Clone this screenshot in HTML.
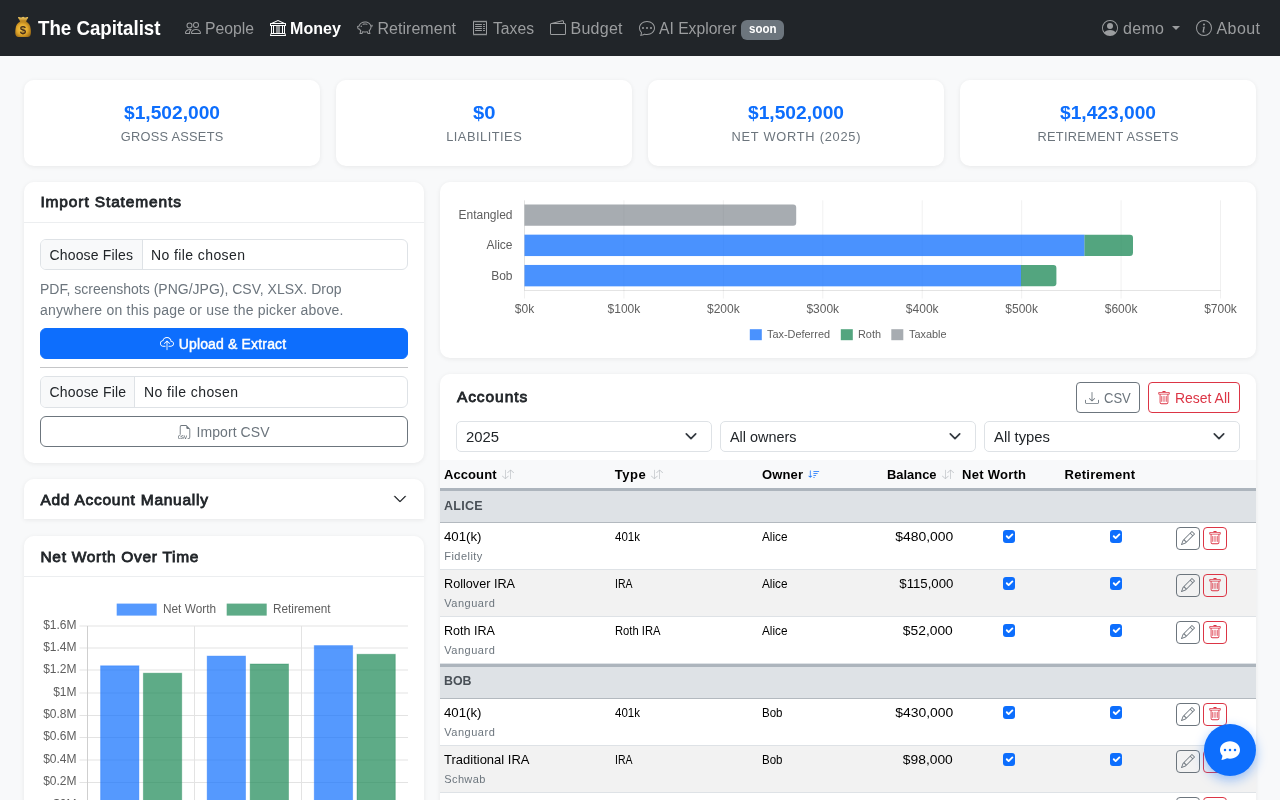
<!DOCTYPE html>
<html lang="en">
<head>
<meta charset="utf-8">
<title>The Capitalist</title>
<style>
*{box-sizing:border-box;margin:0;padding:0}
html,body{width:1280px;height:800px;overflow:hidden}
body{will-change:transform;font-family:"Liberation Sans",sans-serif;background:#f8f9fa;color:#212529;font-size:16px;position:relative}
svg{display:block}
.t{position:absolute;white-space:nowrap;line-height:1.2}
.ic{position:absolute}
.box{position:absolute}
#nav{position:absolute;left:0;top:0;width:1280px;height:56px;background:#212529;color:#9b9d9f;fill:#9b9d9f}
.card{position:absolute;background:#fff;border-radius:10px;box-shadow:0 1px 5px rgba(0,0,0,.07);overflow:hidden}
.hline{position:absolute;left:0;right:0;height:1px;background:#eceef0}
.file{position:absolute;left:16px;width:368px;height:31px;border:1px solid #dee2e6;border-radius:6px;background:#fff;overflow:hidden}
.file .b{position:absolute;left:0;top:0;bottom:0;background:#f8f9fa;border-right:1px solid #dee2e6}
.sel{position:absolute;top:47px;width:256px;height:31px;border:1px solid #dee2e6;border-radius:5px;background:#fff}
.btn{position:absolute;border-radius:6px;border:1px solid}
.ck{position:absolute;width:12.5px;height:12.5px;border-radius:3px;background:#0d6efd}
.ck svg{position:absolute;left:0;top:0}
.row{position:absolute;left:0;width:816px;border-bottom:1px solid #dee2e6}
.sbtn{position:absolute;width:24px;height:23px;border-radius:4px;border:1px solid;background:transparent}
</style>
</head>
<body>
<div id="nav">
<svg class="ic" style="left:13px;top:15px" width="20" height="24" viewBox="13 15 20 24"><defs><radialGradient id="mb" cx="0.45" cy="0.5" r="0.62"><stop offset="0" stop-color="#f6cf52"/><stop offset=".55" stop-color="#e2a82c"/><stop offset="1" stop-color="#9c6a14"/></radialGradient><linearGradient id="mt" x1="0" y1="0" x2="0" y2="1"><stop offset="0" stop-color="#f3cf6a"/><stop offset="1" stop-color="#b9821d"/></linearGradient></defs><path d="M18.100 17.300c1.100-.600 2 .300 2.700.300.800 0 1.500-.800 2.300-.800s1.500.800 2.300.800c.700 0 1.600-.900 2.700-.300.600.500-1.300 2-1.900 3.900h-6.200c-.600-1.900-2.500-3.400-1.900-3.900z" fill="url(#mt)"/><path d="M20.200 21.600h5.800c2.700 1.300 4.300 3.700 4.700 7.300.3 2.600.4 4.900-.4 6.600-.600 1.100-1.800 1.500-3.600 1.500h-7.200c-1.800 0-3-.400-3.600-1.500-.800-1.700-.700-4-.400-6.600.4-3.600 2-6 4.700-7.300z" fill="url(#mb)"/><rect x="19.900" y="20.500" width="6.400" height="1.500" rx=".75" fill="#c08a22"/></svg>
<div class="t" style="left:19.7px;top:24.3px;font-size:11.5px;line-height:12px;font-weight:bold;color:#47301c">$</div>
<div class="t" style="left:38px;top:0px;font-size:20.6px;line-height:56px;transform:scaleX(0.907);transform-origin:left center;font-weight:bold;color:#fff">The Capitalist</div>
<svg class="ic" style="left:184.5px;top:20px" width="16" height="16" viewBox="0 0 16 16"><path d="M15 14s1 0 1-1-1-4-5-4-5 3-5 4 1 1 1 1zm-7.978-1L7 12.996c.001-.264.167-1.03.76-1.72C8.312 10.629 9.282 10 11 10c1.717 0 2.687.63 3.24 1.276.593.69.758 1.457.76 1.72l-.008.002-.014.002zM11 7a2 2 0 1 0 0-4 2 2 0 0 0 0 4m3-2a3 3 0 1 1-6 0 3 3 0 0 1 6 0M6.936 9.28a6 6 0 0 0-1.23-.247A7 7 0 0 0 5 9c-4 0-5 3-5 4q0 1 1 1h4.216A2.24 2.24 0 0 1 5 13c0-1.01.377-2.042 1.09-2.904.243-.294.526-.569.846-.816M4.92 10A5.5 5.5 0 0 0 4 13H1c0-.26.164-1.03.76-1.724.545-.636 1.492-1.256 3.16-1.275ZM1.5 5.5a3 3 0 1 1 6 0 3 3 0 0 1-6 0m3-2a2 2 0 1 0 0 4 2 2 0 0 0 0-4"/></svg>
<div class="t" style="left:205px;top:1px;font-size:16px;line-height:56px;transform:scaleX(0.9835);transform-origin:left center">People</div>
<svg class="ic" style="left:270px;top:20px" width="16" height="16" viewBox="0 0 16 16" fill="#fff"><path d="m8 0 6.61 3h.89a.5.5 0 0 1 .5.5v2a.5.5 0 0 1-.5.5H15v7a.5.5 0 0 1 .485.38l.5 2a.498.498 0 0 1-.485.62H.5a.498.498 0 0 1-.485-.62l.5-2A.5.5 0 0 1 1 13V6H.5a.5.5 0 0 1-.5-.5v-2A.5.5 0 0 1 .5 3h.89zM3.777 3h8.447L8 1zM2 6v7h1V6zm2 0v7h2.5V6zm3.5 0v7h1V6zm2 0v7H12V6zM13 6v7h1V6zm2-1V4H1v1zm-.39 9H1.39l-.25 1h13.72z"/></svg>
<div class="t" style="left:290px;top:1px;font-size:16px;line-height:56px;letter-spacing:0.082px;font-weight:bold;color:#fff">Money</div>
<svg class="ic" style="left:356.5px;top:20px" width="16" height="16" viewBox="0 0 16 16"><path d="M5 6.25a.75.75 0 1 1-1.5 0 .75.75 0 0 1 1.5 0m1.138-1.496A6.6 6.6 0 0 1 7.964 4.5c.666 0 1.303.097 1.893.273a.5.5 0 0 0 .286-.958A7.6 7.6 0 0 0 7.964 3.5c-.734 0-1.441.103-2.102.292a.5.5 0 1 0 .276.962"/><path fill-rule="evenodd" d="M7.964 1.527c-2.977 0-5.571 1.704-6.32 4.125h-.55A1 1 0 0 0 .11 6.824l.254 1.46a1.5 1.5 0 0 0 1.478 1.243h.263c.3.513.688.978 1.145 1.382l-.729 2.477a.5.5 0 0 0 .48.641h2a.5.5 0 0 0 .471-.332l.482-1.351c.635.173 1.31.267 2.011.267.707 0 1.388-.095 2.028-.272l.543 1.372a.5.5 0 0 0 .465.316h2a.5.5 0 0 0 .478-.645l-.761-2.506C13.81 9.895 14.5 8.559 14.5 7.069q0-.218-.02-.431c.261-.11.508-.266.705-.444.315.306.815.306.815-.417 0 .223-.5.223-.461-.026a1 1 0 0 0 .09-.255.7.7 0 0 0-.202-.645.58.58 0 0 0-.707-.098.74.74 0 0 0-.375.562c-.024.243.082.48.32.654a2 2 0 0 1-.259.153c-.534-2.664-3.284-4.595-6.442-4.595M2.516 6.26c.455-2.066 2.667-3.733 5.448-3.733 3.146 0 5.536 2.114 5.536 4.542 0 1.254-.624 2.41-1.67 3.248a.5.5 0 0 0-.165.535l.66 2.175h-.985l-.59-1.487a.5.5 0 0 0-.629-.288c-.661.23-1.39.359-2.157.359a6.6 6.6 0 0 1-2.157-.359.5.5 0 0 0-.635.304l-.525 1.471h-.979l.633-2.15a.5.5 0 0 0-.17-.534 4.65 4.65 0 0 1-1.284-1.541.5.5 0 0 0-.446-.275h-.56a.5.5 0 0 1-.492-.414l-.254-1.46h.933a.5.5 0 0 0 .488-.393m12.621-.857a.6.6 0 0 1-.098.21l-.044-.025c-.146-.09-.157-.175-.152-.223a.24.24 0 0 1 .117-.173c.049-.027.08-.021.113.012a.2.2 0 0 1 .064.199"/></svg>
<div class="t" style="left:377.5px;top:1px;font-size:16px;line-height:56px;letter-spacing:0.028px">Retirement</div>
<svg class="ic" style="left:472px;top:20px" width="16" height="16" viewBox="0 0 16 16"><path d="M1.92.506a.5.5 0 0 1 .434.14L3 1.293l.646-.647a.5.5 0 0 1 .708 0L5 1.293l.646-.647a.5.5 0 0 1 .708 0L7 1.293l.646-.647a.5.5 0 0 1 .708 0L9 1.293l.646-.647a.5.5 0 0 1 .708 0l.646.647.646-.647a.5.5 0 0 1 .708 0l.646.647.646-.647a.5.5 0 0 1 .801.13l.5 1A.5.5 0 0 1 15 2v12a.5.5 0 0 1-.053.224l-.5 1a.5.5 0 0 1-.8.13L13 14.707l-.646.647a.5.5 0 0 1-.708 0L11 14.707l-.646.647a.5.5 0 0 1-.708 0L9 14.707l-.646.647a.5.5 0 0 1-.708 0L7 14.707l-.646.647a.5.5 0 0 1-.708 0L5 14.707l-.646.647a.5.5 0 0 1-.708 0L3 14.707l-.646.647a.5.5 0 0 1-.801-.13l-.5-1A.5.5 0 0 1 1 14V2a.5.5 0 0 1 .053-.224l.5-1a.5.5 0 0 1 .367-.27m.217 1.338L2 2.118v11.764l.137.274.51-.51a.5.5 0 0 1 .707 0l.646.647.646-.646a.5.5 0 0 1 .708 0l.646.646.646-.646a.5.5 0 0 1 .708 0l.646.646.646-.646a.5.5 0 0 1 .708 0l.646.646.646-.646a.5.5 0 0 1 .708 0l.646.646.646-.646a.5.5 0 0 1 .708 0l.509.509.137-.274V2.118l-.137-.274-.51.51a.5.5 0 0 1-.707 0L12 1.707l-.646.647a.5.5 0 0 1-.708 0L10 1.707l-.646.647a.5.5 0 0 1-.708 0L8 1.707l-.646.647a.5.5 0 0 1-.708 0L6 1.707l-.646.647a.5.5 0 0 1-.708 0L4 1.707l-.646.647a.5.5 0 0 1-.708 0z"/><path d="M3 4.5a.5.5 0 0 1 .5-.5h6a.5.5 0 1 1 0 1h-6a.5.5 0 0 1-.5-.5m0 2a.5.5 0 0 1 .5-.5h6a.5.5 0 1 1 0 1h-6a.5.5 0 0 1-.5-.5m0 2a.5.5 0 0 1 .5-.5h6a.5.5 0 1 1 0 1h-6a.5.5 0 0 1-.5-.5m0 2a.5.5 0 0 1 .5-.5h6a.5.5 0 0 1 0 1h-6a.5.5 0 0 1-.5-.5m8-6a.5.5 0 0 1 .5-.5h1a.5.5 0 0 1 0 1h-1a.5.5 0 0 1-.5-.5m0 2a.5.5 0 0 1 .5-.5h1a.5.5 0 0 1 0 1h-1a.5.5 0 0 1-.5-.5m0 2a.5.5 0 0 1 .5-.5h1a.5.5 0 0 1 0 1h-1a.5.5 0 0 1-.5-.5m0 2a.5.5 0 0 1 .5-.5h1a.5.5 0 0 1 0 1h-1a.5.5 0 0 1-.5-.5"/></svg>
<div class="t" style="left:493px;top:1px;font-size:16px;line-height:56px;transform:scaleX(0.9809);transform-origin:left center">Taxes</div>
<svg class="ic" style="left:549.5px;top:20px" width="16" height="16" viewBox="0 0 16 16"><path d="M12.136.326A1.5 1.5 0 0 1 14 1.78V3h.5A1.5 1.5 0 0 1 16 4.5v9a1.5 1.5 0 0 1-1.5 1.5h-13A1.5 1.5 0 0 1 0 13.5v-9a1.5 1.5 0 0 1 1.432-1.499zM5.562 3H13V1.78a.5.5 0 0 0-.621-.484zM1.5 4a.5.5 0 0 0-.5.5v9a.5.5 0 0 0 .5.5h13a.5.5 0 0 0 .5-.5v-9a.5.5 0 0 0-.5-.5z"/></svg>
<div class="t" style="left:570.5px;top:1px;font-size:16px;line-height:56px;letter-spacing:0.258px">Budget</div>
<svg class="ic" style="left:638.5px;top:20px" width="16" height="16" viewBox="0 0 16 16"><path d="M5 8a1 1 0 1 1-2 0 1 1 0 0 1 2 0m4 0a1 1 0 1 1-2 0 1 1 0 0 1 2 0m3 1a1 1 0 1 0 0-2 1 1 0 0 0 0 2"/><path d="m2.165 15.803.02-.004c1.83-.363 2.948-.842 3.468-1.105A9 9 0 0 0 8 15c4.418 0 8-3.134 8-7s-3.582-7-8-7-8 3.134-8 7c0 1.76.743 3.37 1.97 4.6a10.4 10.4 0 0 1-.524 2.318l-.003.011a11 11 0 0 1-.244.637c-.079.186.074.394.273.362a22 22 0 0 0 .693-.125m.8-3.108a1 1 0 0 0-.287-.801C1.618 10.83 1 9.468 1 8c0-3.192 3.004-6 7-6s7 2.808 7 6-3.004 6-7 6a8 8 0 0 1-2.088-.272 1 1 0 0 0-.711.074c-.387.196-1.24.57-2.634.893a11 11 0 0 0 .398-2"/></svg>
<div class="t" style="left:659px;top:1px;font-size:16px;line-height:56px;transform:scaleX(0.9793);transform-origin:left center">AI Explorer</div>
<div class="box" style="left:741px;top:20px;width:43px;height:19.5px;border-radius:6px;background:#6c757d"></div>
<div class="t" style="left:749px;top:20px;font-size:12px;line-height:19px;transform:scaleX(0.9594);transform-origin:left center;font-weight:bold;color:#fff">soon</div>
<svg class="ic" style="left:1102px;top:20px" width="16" height="16" viewBox="0 0 16 16"><path d="M11 6a3 3 0 1 1-6 0 3 3 0 0 1 6 0"/><path fill-rule="evenodd" d="M0 8a8 8 0 1 1 16 0A8 8 0 0 1 0 8m8-7a7 7 0 0 0-5.468 11.37C3.242 11.226 4.805 10 8 10s4.757 1.225 5.468 2.37A7 7 0 0 0 8 1"/></svg>
<div class="t" style="left:1123px;top:1px;font-size:16px;line-height:56px;letter-spacing:0.325px">demo</div>
<div class="box" style="left:1172px;top:26px;width:0;height:0;border-left:4.500px solid transparent;border-right:4.500px solid transparent;border-top:4.500px solid #9b9d9f"></div>
<svg class="ic" style="left:1196px;top:20px" width="16" height="16" viewBox="0 0 16 16"><path d="M8 15A7 7 0 1 1 8 1a7 7 0 0 1 0 14m0 1A8 8 0 1 0 8 0a8 8 0 0 0 0 16"/><path d="m8.93 6.588-2.29.287-.082.38.45.083c.294.07.352.176.288.469l-.738 3.468c-.194.897.105 1.319.808 1.319.545 0 1.178-.252 1.465-.598l.088-.416c-.2.176-.492.246-.686.246-.275 0-.375-.193-.304-.533zM9 4.5a1 1 0 1 1-2 0 1 1 0 0 1 2 0"/></svg>
<div class="t" style="left:1216.5px;top:1px;font-size:16px;line-height:56px;letter-spacing:0.422px">About</div>
</div>
<div class="card" style="left:24px;top:80px;width:296px;height:86px">
<div class="t" style="left:100.0px;top:22.5px;font-size:17.6px;line-height:21px;transform:scaleX(1.0898);transform-origin:left center;font-weight:bold;color:#0d6efd">$1,502,000</div>
<div class="t" style="left:96.8px;top:49px;font-size:12.8px;line-height:16px;letter-spacing:0.265px;color:#6c757d">GROSS ASSETS</div>
</div>
<div class="card" style="left:336px;top:80px;width:296px;height:86px">
<div class="t" style="left:136.8px;top:22.5px;font-size:17.6px;line-height:21px;transform:scaleX(1.1493);transform-origin:left center;font-weight:bold;color:#0d6efd">$0</div>
<div class="t" style="left:110.2px;top:49px;font-size:12.8px;line-height:16px;letter-spacing:0.507px;color:#6c757d">LIABILITIES</div>
</div>
<div class="card" style="left:648px;top:80px;width:296px;height:86px">
<div class="t" style="left:100.0px;top:22.5px;font-size:17.6px;line-height:21px;transform:scaleX(1.0898);transform-origin:left center;font-weight:bold;color:#0d6efd">$1,502,000</div>
<div class="t" style="left:83.5px;top:49px;font-size:12.8px;line-height:16px;letter-spacing:0.76px;color:#6c757d">NET WORTH (2025)</div>
</div>
<div class="card" style="left:960px;top:80px;width:296px;height:86px">
<div class="t" style="left:100.0px;top:22.5px;font-size:17.6px;line-height:21px;transform:scaleX(1.0898);transform-origin:left center;font-weight:bold;color:#0d6efd">$1,423,000</div>
<div class="t" style="left:77.5px;top:49px;font-size:12.8px;line-height:16px;letter-spacing:0.292px;color:#6c757d">RETIREMENT ASSETS</div>
</div>
<div class="card" style="left:24px;top:182px;width:400px;height:281px">
<div class="t" style="left:16.4px;top:10.2px;font-size:15.5px;line-height:20px;letter-spacing:0.873px;-webkit-text-stroke:.8px #212529">Import Statements</div>
<div class="hline" style="top:40px"></div>
<div class="file" style="top:57px"><div class="b" style="width:102px"></div>
<div class="t" style="left:8.5px;top:1px;font-size:14px;line-height:29px;letter-spacing:0.163px">Choose Files</div>
<div class="t" style="left:110px;top:1px;font-size:14px;line-height:29px;letter-spacing:0.406px">No file chosen</div>
</div>
<div class="t" style="left:16px;top:96.5px;font-size:14px;line-height:21px;letter-spacing:0.003px;color:#6c757d">PDF, screenshots (PNG/JPG), CSV, XLSX. Drop</div>
<div class="t" style="left:16px;top:117.5px;font-size:14px;line-height:21px;letter-spacing:0.207px;color:#6c757d">anywhere on this page or use the picker above.</div>
<div class="btn" style="left:16px;top:146px;width:368px;height:31px;background:#0d6efd;border-color:#0d6efd"></div>
<svg class="ic" style="left:136px;top:154.5px" width="14" height="14" viewBox="0 0 16 16" fill="#fff"><path fill-rule="evenodd" d="M4.406 1.342A5.53 5.53 0 0 1 8 0c2.69 0 4.923 2 5.166 4.579C14.758 4.804 16 6.137 16 7.773 16 9.569 14.502 11 12.687 11H10a.5.5 0 0 1 0-1h2.688C13.979 10 15 8.988 15 7.773c0-1.216-1.02-2.228-2.313-2.228h-.5v-.5C12.188 2.825 10.328 1 8 1a4.53 4.53 0 0 0-2.941 1.1c-.757.652-1.153 1.438-1.153 2.055v.448l-.445.049C2.064 4.805 1 5.952 1 7.318 1 8.785 2.23 10 3.781 10H6a.5.5 0 0 1 0 1H3.781C1.708 11 0 9.366 0 7.318c0-1.763 1.266-3.223 2.942-3.593.143-.863.698-1.723 1.464-2.383"/><path fill-rule="evenodd" d="M7.646 4.146a.5.5 0 0 1 .708 0l3 3a.5.5 0 0 1-.708.708L8.5 5.707V14.5a.5.5 0 0 1-1 0V5.707L5.354 7.854a.5.5 0 1 1-.708-.708z"/></svg>
<div class="t" style="left:154.7px;top:147.8px;font-size:14px;line-height:29px;color:#fff;letter-spacing:0.16px;-webkit-text-stroke:.45px #fff">Upload &amp; Extract</div>
<div class="box" style="left:16px;top:185px;width:368px;height:1px;background:#c5c6c8"></div>
<div class="file" style="top:194.250px;height:31.250px"><div class="b" style="width:94px"></div>
<div class="t" style="left:8.5px;top:1px;font-size:14px;line-height:29px;letter-spacing:0.18px">Choose File</div>
<div class="t" style="left:103px;top:1px;font-size:14px;line-height:29px;letter-spacing:0.406px">No file chosen</div>
</div>
<div class="btn" style="left:16px;top:234.250px;width:368px;height:31px;border-color:#6c757d"></div>
<svg class="ic" style="left:153.5px;top:243px" width="14" height="14" viewBox="0 0 16 16" fill="#6c757d"><path fill-rule="evenodd" d="M14 4.5V14a2 2 0 0 1-2 2h-1v-1h1a1 1 0 0 0 1-1V4.5h-2A1.5 1.5 0 0 1 9.500 3V1H4a1 1 0 0 0-1 1v9H2V2a2 2 0 0 1 2-2h5.500zM3.517 14.841a1.130 1.130 0 0 0 .401.823q.195.162.478.252.284.091.665.091.507 0 .859-.158.354-.158.539-.440.187-.284.187-.656 0-.336-.134-.560a1 1 0 0 0-.375-.357 2 2 0 0 0-.566-.210l-.621-.144a1 1 0 0 1-.404-.176.370.370 0 0 1-.144-.299q0-.234.185-.384.188-.152.512-.152.214 0 .370.068a.600.600 0 0 1 .246.181.560.560 0 0 1 .120.258h.750a1.100 1.100 0 0 0-.200-.566 1.200 1.200 0 0 0-.500-.410 1.800 1.800 0 0 0-.780-.152q-.439 0-.776.150-.337.149-.527.421-.190.273-.190.639 0 .302.122.524.124.223.352.367.228.143.539.213l.618.144q.310.073.463.193a.390.390 0 0 1 .152.326.500.500 0 0 1-.085.290.560.560 0 0 1-.255.193q-.167.070-.413.070-.175 0-.320-.040a.800.800 0 0 1-.248-.115.580.580 0 0 1-.255-.384zM.806 13.693q0-.373.102-.633a.870.870 0 0 1 .302-.399.800.800 0 0 1 .475-.137q.225 0 .398.097a.700.700 0 0 1 .272.260.850.850 0 0 1 .120.381h.765v-.072a1.330 1.330 0 0 0-.466-.964 1.400 1.400 0 0 0-.489-.272 1.800 1.800 0 0 0-.606-.097q-.534 0-.911.223-.375.222-.572.632-.195.410-.196.979v.498q0 .568.193.976.197.407.572.626.375.217.914.217.439 0 .785-.164t.550-.454a1.270 1.270 0 0 0 .226-.674v-.076h-.764a.800.800 0 0 1-.118.363.700.700 0 0 1-.272.250.900.900 0 0 1-.401.087.850.850 0 0 1-.478-.132.830.830 0 0 1-.299-.392 1.700 1.700 0 0 1-.102-.627zm8.239 2.238h-.953l-1.338-3.999h.917l.896 3.138h.038l.888-3.138h.879z"/></svg>
<div class="t" style="left:172.5px;top:235.5px;font-size:14px;line-height:29px;letter-spacing:0.072px;color:#6c757d">Import CSV</div>
</div>
<div class="card" style="left:24px;top:479px;width:400px;height:40px;border-radius:10px 10px 0 0">
<div class="t" style="left:16.4px;top:10.5px;font-size:15.5px;line-height:20px;letter-spacing:0.749px;-webkit-text-stroke:.8px #212529">Add Account Manually</div>
<svg class="ic" style="left:369px;top:12.5px" width="14" height="14" viewBox="0 0 16 16" fill="#212529" stroke="#212529" stroke-width=".5"><path fill-rule="evenodd" d="M1.646 4.646a.5.5 0 0 1 .708 0L8 10.293l5.646-5.647a.5.5 0 0 1 .708.708l-6 6a.5.5 0 0 1-.708 0l-6-6a.5.5 0 0 1 0-.708"/></svg>
</div>
<div class="card" style="left:24px;top:535.500px;width:400px;height:300px">
<div class="t" style="left:16.4px;top:11.1px;font-size:15.5px;line-height:20px;letter-spacing:0.712px;-webkit-text-stroke:.8px #212529">Net Worth Over Time</div>
<div class="hline" style="top:40.500px"></div>
<svg class="ic" style="left:0;top:42px" width="400" height="260" viewBox="0 42 400 260">
<line x1="55.50" x2="384.00" y1="90.0" y2="90.0" stroke="#e3e3e3" stroke-width="1"/>
<line x1="55.50" x2="384.00" y1="112.0" y2="112.0" stroke="#e3e3e3" stroke-width="1"/>
<line x1="55.50" x2="384.00" y1="134.0" y2="134.0" stroke="#e3e3e3" stroke-width="1"/>
<line x1="55.50" x2="384.00" y1="157.0" y2="157.0" stroke="#e3e3e3" stroke-width="1"/>
<line x1="55.50" x2="384.00" y1="179.5" y2="179.5" stroke="#e3e3e3" stroke-width="1"/>
<line x1="55.50" x2="384.00" y1="201.5" y2="201.5" stroke="#e3e3e3" stroke-width="1"/>
<line x1="55.50" x2="384.00" y1="224.0" y2="224.0" stroke="#e3e3e3" stroke-width="1"/>
<line x1="55.50" x2="384.00" y1="246.5" y2="246.5" stroke="#e3e3e3" stroke-width="1"/>
<line x1="55.50" x2="384.00" y1="269.0" y2="269.0" stroke="#e3e3e3" stroke-width="1"/>
<line x1="63.5" x2="63.5" y1="90.00" y2="300" stroke="#cfcfcf" stroke-width="1"/>
<line x1="170.5" x2="170.5" y1="90.00" y2="300" stroke="#e3e3e3" stroke-width="1"/>
<line x1="277.5" x2="277.5" y1="90.00" y2="300" stroke="#e3e3e3" stroke-width="1"/>
<rect x="76.60" y="129.80" width="38.3" height="300" fill="#0d6efd" fill-opacity=".7" stroke="#0d6efd" stroke-opacity=".35" stroke-width="1"/>
<rect x="119.40" y="137.20" width="38.3" height="300" fill="#198754" fill-opacity=".7" stroke="#198754" stroke-opacity=".35" stroke-width="1"/>
<rect x="183.20" y="120.10" width="38.3" height="300" fill="#0d6efd" fill-opacity=".7" stroke="#0d6efd" stroke-opacity=".35" stroke-width="1"/>
<rect x="226.20" y="128.00" width="38.3" height="300" fill="#198754" fill-opacity=".7" stroke="#198754" stroke-opacity=".35" stroke-width="1"/>
<rect x="290.30" y="109.60" width="38.3" height="300" fill="#0d6efd" fill-opacity=".7" stroke="#0d6efd" stroke-opacity=".35" stroke-width="1"/>
<rect x="333.00" y="118.30" width="38.3" height="300" fill="#198754" fill-opacity=".7" stroke="#198754" stroke-opacity=".35" stroke-width="1"/>
<rect x="92.70" y="67.60" width="40" height="12" fill="#0d6efd" fill-opacity=".7"/>
<rect x="202.70" y="67.60" width="40" height="12" fill="#198754" fill-opacity=".7"/>
</svg>
<div class="t" style="left:139.2px;top:66.79999999999995px;font-size:12px;line-height:14px;transform:scaleX(0.9852);transform-origin:left center;color:#5e5e5e">Net Worth</div>
<div class="t" style="left:249.3px;top:66.79999999999995px;font-size:12px;line-height:14px;transform:scaleX(0.9798);transform-origin:left center;color:#5e5e5e">Retirement</div>
<div class="t" style="right:347.5px;top:82.3px;font-size:12px;line-height:14px;color:#5e5e5e">$1.6M</div>
<div class="t" style="right:347.5px;top:104.3px;font-size:12px;line-height:14px;color:#5e5e5e">$1.4M</div>
<div class="t" style="right:347.5px;top:126.3px;font-size:12px;line-height:14px;color:#5e5e5e">$1.2M</div>
<div class="t" style="right:347.5px;top:149.3px;font-size:12px;line-height:14px;color:#5e5e5e">$1M</div>
<div class="t" style="right:347.5px;top:171.8px;font-size:12px;line-height:14px;color:#5e5e5e">$0.8M</div>
<div class="t" style="right:347.5px;top:193.8px;font-size:12px;line-height:14px;color:#5e5e5e">$0.6M</div>
<div class="t" style="right:347.5px;top:216.3px;font-size:12px;line-height:14px;color:#5e5e5e">$0.4M</div>
<div class="t" style="right:347.5px;top:238.8px;font-size:12px;line-height:14px;color:#5e5e5e">$0.2M</div>
<div class="t" style="right:347.5px;top:261.3px;font-size:12px;line-height:14px;color:#5e5e5e">$0M</div>
</div>
<div class="card" style="left:440px;top:182px;width:816px;height:176px">
<svg class="ic" style="left:0;top:0" width="816" height="176" viewBox="0 0 816 176">
<line x1="84.5" x2="84.5" y1="18.30" y2="116.50" stroke="#000" stroke-opacity=".058" stroke-width="1"/>
<line x1="183.93" x2="183.93" y1="18.30" y2="116.50" stroke="#000" stroke-opacity=".058" stroke-width="1"/>
<line x1="283.36" x2="283.36" y1="18.30" y2="116.50" stroke="#000" stroke-opacity=".058" stroke-width="1"/>
<line x1="382.79" x2="382.79" y1="18.30" y2="116.50" stroke="#000" stroke-opacity=".058" stroke-width="1"/>
<line x1="482.22" x2="482.22" y1="18.30" y2="116.50" stroke="#000" stroke-opacity=".058" stroke-width="1"/>
<line x1="581.65" x2="581.65" y1="18.30" y2="116.50" stroke="#000" stroke-opacity=".058" stroke-width="1"/>
<line x1="681.08" x2="681.08" y1="18.30" y2="116.50" stroke="#000" stroke-opacity=".058" stroke-width="1"/>
<line x1="780.51" x2="780.51" y1="18.30" y2="116.50" stroke="#000" stroke-opacity=".058" stroke-width="1"/>
<line x1="84.50" x2="84.50" y1="18.30" y2="108.50" stroke="#000" stroke-opacity=".058" stroke-width="1"/>
<line x1="84.50" x2="780.51" y1="108.50" y2="108.50" stroke="#000" stroke-opacity=".105" stroke-width="1"/>
<path d="M84.50 22.40H353.20a3 3 0 0 1 3 3V40.80a3 3 0 0 1 -3 3H84.50z" fill="#6c757d" fill-opacity=".6"/>
<rect x="84.50" y="52.65" width="560.00" height="21.4" fill="#0d6efd" fill-opacity=".75"/>
<path d="M644.50 52.65H690.00a3 3 0 0 1 3 3V71.05a3 3 0 0 1 -3 3H644.50z" fill="#198754" fill-opacity=".75"/>
<rect x="84.50" y="82.95" width="496.50" height="21.4" fill="#0d6efd" fill-opacity=".75"/>
<path d="M581.00 82.95H613.40a3 3 0 0 1 3 3V101.35a3 3 0 0 1 -3 3H581.00z" fill="#198754" fill-opacity=".75"/>
<rect x="309.80" y="147.20" width="12" height="11" fill="#0d6efd" fill-opacity=".75"/>
<rect x="400.80" y="147.20" width="12" height="11" fill="#198754" fill-opacity=".75"/>
<rect x="451.30" y="147.20" width="12" height="11" fill="#6c757d" fill-opacity=".6"/>
</svg>
<div class="t" style="right:743.5px;top:26px;font-size:12px;line-height:14px;color:#5e5e5e">Entangled</div>
<div class="t" style="right:743.5px;top:56.3px;font-size:12px;line-height:14px;color:#5e5e5e">Alice</div>
<div class="t" style="right:743.5px;top:86.6px;font-size:12px;line-height:14px;color:#5e5e5e">Bob</div>
<div class="t" style="left:44.50px;top:120px;width:80px;text-align:center;font-size:12px;line-height:14px;color:#5e5e5e">$0k</div>
<div class="t" style="left:143.93px;top:120px;width:80px;text-align:center;font-size:12px;line-height:14px;color:#5e5e5e">$100k</div>
<div class="t" style="left:243.36px;top:120px;width:80px;text-align:center;font-size:12px;line-height:14px;color:#5e5e5e">$200k</div>
<div class="t" style="left:342.79px;top:120px;width:80px;text-align:center;font-size:12px;line-height:14px;color:#5e5e5e">$300k</div>
<div class="t" style="left:442.22px;top:120px;width:80px;text-align:center;font-size:12px;line-height:14px;color:#5e5e5e">$400k</div>
<div class="t" style="left:541.65px;top:120px;width:80px;text-align:center;font-size:12px;line-height:14px;color:#5e5e5e">$500k</div>
<div class="t" style="left:641.08px;top:120px;width:80px;text-align:center;font-size:12px;line-height:14px;color:#5e5e5e">$600k</div>
<div class="t" style="left:740.51px;top:120px;width:80px;text-align:center;font-size:12px;line-height:14px;color:#5e5e5e">$700k</div>
<div class="t" style="left:327px;top:145.8px;font-size:11px;line-height:13px;transform:scaleX(0.9909);transform-origin:left center;color:#5e5e5e">Tax-Deferred</div>
<div class="t" style="left:418px;top:145.8px;font-size:11px;line-height:13px;transform:scaleX(0.9899);transform-origin:left center;color:#5e5e5e">Roth</div>
<div class="t" style="left:469px;top:145.8px;font-size:11px;line-height:13px;transform:scaleX(0.9891);transform-origin:left center;color:#5e5e5e">Taxable</div>
</div>
<div class="card" style="left:440px;top:374px;width:816px;height:470px">
<div class="t" style="left:16.9px;top:12.9px;font-size:15.5px;line-height:20px;letter-spacing:0.935px;-webkit-text-stroke:.8px #212529">Accounts</div>
<div class="btn" style="left:636px;top:8px;width:64px;height:31px;border-color:#6c757d;border-radius:4px"></div>
<svg class="ic" style="left:645.2px;top:17px" width="14" height="14" viewBox="0 0 16 16" fill="#6c757d"><path d="M.5 9.9a.5.5 0 0 1 .5.5v2.5a1 1 0 0 0 1 1h12a1 1 0 0 0 1-1v-2.5a.5.5 0 0 1 1 0v2.5a2 2 0 0 1-2 2H2a2 2 0 0 1-2-2v-2.5a.5.5 0 0 1 .5-.5"/><path d="M7.646 11.854a.5.5 0 0 0 .708 0l3-3a.5.5 0 0 0-.708-.708L8.5 10.293V1.5a.5.5 0 0 0-1 0v8.793L5.354 8.146a.5.5 0 1 0-.708.708z"/></svg>
<div class="t" style="left:663.6px;top:10.1px;font-size:14px;line-height:29px;transform:scaleX(0.931);transform-origin:left center;color:#6c757d">CSV</div>
<div class="btn" style="left:708px;top:8px;width:92px;height:31px;border-color:#dc3545;border-radius:4px"></div>
<svg class="ic" style="left:716.7px;top:17.2px" width="14" height="14" viewBox="0 0 16 16" fill="#dc3545"><path d="M5.5 5.5A.5.5 0 0 1 6 6v6a.5.5 0 0 1-1 0V6a.5.5 0 0 1 .5-.5m2.5 0a.5.5 0 0 1 .5.5v6a.5.5 0 0 1-1 0V6a.5.5 0 0 1 .5-.5m3 .5a.5.5 0 0 0-1 0v6a.5.5 0 0 0 1 0z"/><path d="M14.5 3a1 1 0 0 1-1 1H13v9a2 2 0 0 1-2 2H5a2 2 0 0 1-2-2V4h-.5a1 1 0 0 1-1-1V2a1 1 0 0 1 1-1H6a1 1 0 0 1 1-1h2a1 1 0 0 1 1 1h3.5a1 1 0 0 1 1 1zM4.118 4 4 4.059V13a1 1 0 0 0 1 1h6a1 1 0 0 0 1-1V4.059L11.882 4zM2.5 3h11V2h-11z"/></svg>
<div class="t" style="left:735.2px;top:10.1px;font-size:14px;line-height:29px;transform:scaleX(0.9973);transform-origin:left center;color:#dc3545">Reset All</div>
<div class="sel" style="left:16px">
<div class="t" style="left:8.5px;top:0px;font-size:15px;line-height:29px;transform:scaleX(0.9889);transform-origin:left center">2025</div>
<svg class="ic" style="left:227px;top:8px" width="14" height="12" viewBox="0 0 14 12"><path d="M2.300 3.800l4.700 4.900 4.700-4.900" fill="none" stroke="#343a40" stroke-width="1.7" stroke-linecap="round" stroke-linejoin="round"/></svg>
</div>
<div class="sel" style="left:280px">
<div class="t" style="left:8.5px;top:0px;font-size:15px;line-height:29px;transform:scaleX(0.9611);transform-origin:left center">All owners</div>
<svg class="ic" style="left:227px;top:8px" width="14" height="12" viewBox="0 0 14 12"><path d="M2.300 3.800l4.700 4.900 4.700-4.900" fill="none" stroke="#343a40" stroke-width="1.7" stroke-linecap="round" stroke-linejoin="round"/></svg>
</div>
<div class="sel" style="left:544px">
<div class="t" style="left:8.5px;top:0px;font-size:15px;line-height:29px;transform:scaleX(0.9878);transform-origin:left center">All types</div>
<svg class="ic" style="left:227px;top:8px" width="14" height="12" viewBox="0 0 14 12"><path d="M2.300 3.800l4.700 4.900 4.700-4.900" fill="none" stroke="#343a40" stroke-width="1.7" stroke-linecap="round" stroke-linejoin="round"/></svg>
</div>
<div class="box" style="left:0;top:86px;width:816px;height:28.300px;background:#f8f9fa"></div>
<div class="box" style="left:0;top:114.300px;width:816px;height:2.700px;background:#adb5bd"></div>
<div class="t" style="left:4px;top:92.5px;font-size:13px;line-height:16px;letter-spacing:0.083px;font-weight:bold;color:#000">Account</div>
<svg class="ic" style="left:62px;top:94.9px" width="12" viewBox="0 0 16 16" fill="#c2c6ca" preserveAspectRatio="none" height="10.7"><path fill-rule="evenodd" d="M11.5 15a.5.5 0 0 0 .5-.5V2.707l3.146 3.147a.5.5 0 0 0 .708-.708l-4-4a.5.5 0 0 0-.708 0l-4 4a.5.5 0 1 0 .708.708L11 2.707V14.5a.5.5 0 0 0 .5.5m-7-14a.5.5 0 0 1 .5.5v11.793l3.146-3.147a.5.5 0 0 1 .708.708l-4 4a.5.5 0 0 1-.708 0l-4-4a.5.5 0 0 1 .708-.708L4 13.293V1.5a.5.5 0 0 1 .5-.5"/></svg>
<div class="t" style="left:174.7px;top:92.5px;font-size:13px;line-height:16px;letter-spacing:0.541px;font-weight:bold;color:#000">Type</div>
<svg class="ic" style="left:210.5px;top:94.9px" width="12" viewBox="0 0 16 16" fill="#c2c6ca" preserveAspectRatio="none" height="10.7"><path fill-rule="evenodd" d="M11.5 15a.5.5 0 0 0 .5-.5V2.707l3.146 3.147a.5.5 0 0 0 .708-.708l-4-4a.5.5 0 0 0-.708 0l-4 4a.5.5 0 1 0 .708.708L11 2.707V14.5a.5.5 0 0 0 .5.5m-7-14a.5.5 0 0 1 .5.5v11.793l3.146-3.147a.5.5 0 0 1 .708.708l-4 4a.5.5 0 0 1-.708 0l-4-4a.5.5 0 0 1 .708-.708L4 13.293V1.5a.5.5 0 0 1 .5-.5"/></svg>
<div class="t" style="left:322px;top:92.5px;font-size:13px;line-height:16px;letter-spacing:0.137px;font-weight:bold;color:#000">Owner</div>
<svg class="ic" style="left:368.4px;top:94.9px" width="12" viewBox="0 0 16 16" fill="#0d6efd" preserveAspectRatio="none" height="10.7"><path d="M3.5 2.5a.5.5 0 0 0-1 0v8.793l-1.146-1.147a.5.5 0 0 0-.708.708l2 1.999.007.007a.497.497 0 0 0 .7-.006l2-2a.5.5 0 0 0-.707-.708L3.5 11.293zm3.5 1a.5.5 0 0 1 .5-.5h7a.5.5 0 0 1 0 1h-7a.5.5 0 0 1-.5-.5M7.5 6a.5.5 0 0 0 0 1h5a.5.5 0 0 0 0-1zm0 3a.5.5 0 0 0 0 1h3a.5.5 0 0 0 0-1zm0 3a.5.5 0 0 0 0 1h1a.5.5 0 0 0 0-1z"/></svg>
<div class="t" style="left:447px;top:92.5px;font-size:13px;line-height:16px;transform:scaleX(0.9928);transform-origin:left center;font-weight:bold;color:#000">Balance</div>
<svg class="ic" style="left:502.2px;top:94.9px" width="12" viewBox="0 0 16 16" fill="#c2c6ca" preserveAspectRatio="none" height="10.7"><path fill-rule="evenodd" d="M11.5 15a.5.5 0 0 0 .5-.5V2.707l3.146 3.147a.5.5 0 0 0 .708-.708l-4-4a.5.5 0 0 0-.708 0l-4 4a.5.5 0 1 0 .708.708L11 2.707V14.5a.5.5 0 0 0 .5.5m-7-14a.5.5 0 0 1 .5.5v11.793l3.146-3.147a.5.5 0 0 1 .708.708l-4 4a.5.5 0 0 1-.708 0l-4-4a.5.5 0 0 1 .708-.708L4 13.293V1.5a.5.5 0 0 1 .5-.5"/></svg>
<div class="t" style="left:522px;top:92.5px;font-size:13px;line-height:16px;letter-spacing:0.267px;font-weight:bold;color:#000">Net Worth</div>
<div class="t" style="left:624.5px;top:92.5px;font-size:13px;line-height:16px;letter-spacing:0.288px;font-weight:bold;color:#000">Retirement</div>
<div class="box" style="left:0;top:117px;width:816px;height:32px;background:#dee2e6;border-bottom:1px solid #b3b9bf"></div>
<div class="t" style="left:4px;top:123.7px;font-size:12.5px;line-height:16px;letter-spacing:0.25px;font-weight:bold;color:#495057">ALICE</div>
<div class="row" style="top:149px;height:47px;background:#fff"></div>
<div class="t" style="left:4px;top:153.8px;font-size:13.5px;line-height:18px;transform:scaleX(0.98);transform-origin:left center;color:#000">401(k)</div>
<div class="t" style="left:4.3px;top:175.1px;font-size:11px;line-height:14px;letter-spacing:0.451px;color:#6c757d">Fidelity</div>
<div class="t" style="left:174.7px;top:155.85px;font-size:12px;line-height:14px;transform:scaleX(0.9607);transform-origin:left center;color:#000">401k</div>
<div class="t" style="left:322px;top:155.85px;font-size:12px;line-height:14px;transform:scaleX(0.9804);transform-origin:left center;color:#000">Alice</div>
<div class="t" style="right:303px;top:153.8px;font-size:13.5px;line-height:18px;transform:scaleX(1.0301);transform-origin:right center;color:#000">$480,000</div>
<div class="ck" style="left:562.8px;top:156px"><svg width="12.5" height="12.5" viewBox="0 0 20 20"><path fill="none" stroke="#fff" stroke-linecap="round" stroke-linejoin="round" stroke-width="3" d="m6 10 3 3 6-6"/></svg></div>
<div class="ck" style="left:669.8px;top:156px"><svg width="12.5" height="12.5" viewBox="0 0 20 20"><path fill="none" stroke="#fff" stroke-linecap="round" stroke-linejoin="round" stroke-width="3" d="m6 10 3 3 6-6"/></svg></div>
<div class="sbtn" style="left:736px;top:153px;border-color:#6c757d"></div>
<svg class="ic" style="left:741px;top:157.3px" width="14" height="14" viewBox="0 0 16 16" fill="#6c757d"><path d="M12.146.146a.5.5 0 0 1 .708 0l3 3a.5.5 0 0 1 0 .708l-10 10a.5.5 0 0 1-.168.11l-5 2a.5.5 0 0 1-.65-.65l2-5a.5.5 0 0 1 .11-.168zM11.207 2.5 13.5 4.793 14.793 3.5 12.5 1.207zm1.586 3L10.5 3.207 4 9.707V10h.5a.5.5 0 0 1 .5.5v.5h.5a.5.5 0 0 1 .5.5v.5h.293zm-9.761 5.175-.106.106-1.528 3.821 3.821-1.528.106-.106A.5.5 0 0 1 5 12.5V12h-.5a.5.5 0 0 1-.5-.5V11h-.5a.5.5 0 0 1-.468-.325"/></svg>
<div class="sbtn" style="left:763px;top:153px;border-color:#dc3545"></div>
<svg class="ic" style="left:768px;top:157px" width="14" height="14" viewBox="0 0 16 16" fill="#dc3545"><path d="M5.5 5.5A.5.5 0 0 1 6 6v6a.5.5 0 0 1-1 0V6a.5.5 0 0 1 .5-.5m2.5 0a.5.5 0 0 1 .5.5v6a.5.5 0 0 1-1 0V6a.5.5 0 0 1 .5-.5m3 .5a.5.5 0 0 0-1 0v6a.5.5 0 0 0 1 0z"/><path d="M14.5 3a1 1 0 0 1-1 1H13v9a2 2 0 0 1-2 2H5a2 2 0 0 1-2-2V4h-.5a1 1 0 0 1-1-1V2a1 1 0 0 1 1-1H6a1 1 0 0 1 1-1h2a1 1 0 0 1 1 1h3.5a1 1 0 0 1 1 1zM4.118 4 4 4.059V13a1 1 0 0 0 1 1h6a1 1 0 0 0 1-1V4.059L11.882 4zM2.5 3h11V2h-11z"/></svg>
<div class="row" style="top:196px;height:47px;background:#f2f2f2"></div>
<div class="t" style="left:4px;top:200.8px;font-size:13.5px;line-height:18px;transform:scaleX(0.937);transform-origin:left center;color:#000">Rollover IRA</div>
<div class="t" style="left:4.3px;top:222.1px;font-size:11px;line-height:14px;letter-spacing:0.516px;color:#6c757d">Vanguard</div>
<div class="t" style="left:174.7px;top:202.85px;font-size:12px;line-height:14px;transform:scaleX(0.8748);transform-origin:left center;color:#000">IRA</div>
<div class="t" style="left:322px;top:202.85px;font-size:12px;line-height:14px;transform:scaleX(0.9804);transform-origin:left center;color:#000">Alice</div>
<div class="t" style="right:303px;top:200.8px;font-size:13.5px;line-height:18px;transform:scaleX(0.9764);transform-origin:right center;color:#000">$115,000</div>
<div class="ck" style="left:562.8px;top:203px"><svg width="12.5" height="12.5" viewBox="0 0 20 20"><path fill="none" stroke="#fff" stroke-linecap="round" stroke-linejoin="round" stroke-width="3" d="m6 10 3 3 6-6"/></svg></div>
<div class="ck" style="left:669.8px;top:203px"><svg width="12.5" height="12.5" viewBox="0 0 20 20"><path fill="none" stroke="#fff" stroke-linecap="round" stroke-linejoin="round" stroke-width="3" d="m6 10 3 3 6-6"/></svg></div>
<div class="sbtn" style="left:736px;top:200px;border-color:#6c757d"></div>
<svg class="ic" style="left:741px;top:204.3px" width="14" height="14" viewBox="0 0 16 16" fill="#6c757d"><path d="M12.146.146a.5.5 0 0 1 .708 0l3 3a.5.5 0 0 1 0 .708l-10 10a.5.5 0 0 1-.168.11l-5 2a.5.5 0 0 1-.65-.65l2-5a.5.5 0 0 1 .11-.168zM11.207 2.5 13.5 4.793 14.793 3.5 12.5 1.207zm1.586 3L10.5 3.207 4 9.707V10h.5a.5.5 0 0 1 .5.5v.5h.5a.5.5 0 0 1 .5.5v.5h.293zm-9.761 5.175-.106.106-1.528 3.821 3.821-1.528.106-.106A.5.5 0 0 1 5 12.5V12h-.5a.5.5 0 0 1-.5-.5V11h-.5a.5.5 0 0 1-.468-.325"/></svg>
<div class="sbtn" style="left:763px;top:200px;border-color:#dc3545"></div>
<svg class="ic" style="left:768px;top:204px" width="14" height="14" viewBox="0 0 16 16" fill="#dc3545"><path d="M5.5 5.5A.5.5 0 0 1 6 6v6a.5.5 0 0 1-1 0V6a.5.5 0 0 1 .5-.5m2.5 0a.5.5 0 0 1 .5.5v6a.5.5 0 0 1-1 0V6a.5.5 0 0 1 .5-.5m3 .5a.5.5 0 0 0-1 0v6a.5.5 0 0 0 1 0z"/><path d="M14.5 3a1 1 0 0 1-1 1H13v9a2 2 0 0 1-2 2H5a2 2 0 0 1-2-2V4h-.5a1 1 0 0 1-1-1V2a1 1 0 0 1 1-1H6a1 1 0 0 1 1-1h2a1 1 0 0 1 1 1h3.5a1 1 0 0 1 1 1zM4.118 4 4 4.059V13a1 1 0 0 0 1 1h6a1 1 0 0 0 1-1V4.059L11.882 4zM2.5 3h11V2h-11z"/></svg>
<div class="row" style="top:243px;height:47px;background:#fff"></div>
<div class="t" style="left:4px;top:247.8px;font-size:13.5px;line-height:18px;transform:scaleX(0.9311);transform-origin:left center;color:#000">Roth IRA</div>
<div class="t" style="left:4.3px;top:269.1px;font-size:11px;line-height:14px;letter-spacing:0.516px;color:#6c757d">Vanguard</div>
<div class="t" style="left:174.7px;top:249.85px;font-size:12px;line-height:14px;transform:scaleX(0.9346);transform-origin:left center;color:#000">Roth IRA</div>
<div class="t" style="left:322px;top:249.85px;font-size:12px;line-height:14px;transform:scaleX(0.9804);transform-origin:left center;color:#000">Alice</div>
<div class="t" style="right:303px;top:247.8px;font-size:13.5px;line-height:18px;transform:scaleX(1.0246);transform-origin:right center;color:#000">$52,000</div>
<div class="ck" style="left:562.8px;top:250px"><svg width="12.5" height="12.5" viewBox="0 0 20 20"><path fill="none" stroke="#fff" stroke-linecap="round" stroke-linejoin="round" stroke-width="3" d="m6 10 3 3 6-6"/></svg></div>
<div class="ck" style="left:669.8px;top:250px"><svg width="12.5" height="12.5" viewBox="0 0 20 20"><path fill="none" stroke="#fff" stroke-linecap="round" stroke-linejoin="round" stroke-width="3" d="m6 10 3 3 6-6"/></svg></div>
<div class="sbtn" style="left:736px;top:247px;border-color:#6c757d"></div>
<svg class="ic" style="left:741px;top:251.3px" width="14" height="14" viewBox="0 0 16 16" fill="#6c757d"><path d="M12.146.146a.5.5 0 0 1 .708 0l3 3a.5.5 0 0 1 0 .708l-10 10a.5.5 0 0 1-.168.11l-5 2a.5.5 0 0 1-.65-.65l2-5a.5.5 0 0 1 .11-.168zM11.207 2.5 13.5 4.793 14.793 3.5 12.5 1.207zm1.586 3L10.5 3.207 4 9.707V10h.5a.5.5 0 0 1 .5.5v.5h.5a.5.5 0 0 1 .5.5v.5h.293zm-9.761 5.175-.106.106-1.528 3.821 3.821-1.528.106-.106A.5.5 0 0 1 5 12.5V12h-.5a.5.5 0 0 1-.5-.5V11h-.5a.5.5 0 0 1-.468-.325"/></svg>
<div class="sbtn" style="left:763px;top:247px;border-color:#dc3545"></div>
<svg class="ic" style="left:768px;top:251px" width="14" height="14" viewBox="0 0 16 16" fill="#dc3545"><path d="M5.5 5.5A.5.5 0 0 1 6 6v6a.5.5 0 0 1-1 0V6a.5.5 0 0 1 .5-.5m2.5 0a.5.5 0 0 1 .5.5v6a.5.5 0 0 1-1 0V6a.5.5 0 0 1 .5-.5m3 .5a.5.5 0 0 0-1 0v6a.5.5 0 0 0 1 0z"/><path d="M14.5 3a1 1 0 0 1-1 1H13v9a2 2 0 0 1-2 2H5a2 2 0 0 1-2-2V4h-.5a1 1 0 0 1-1-1V2a1 1 0 0 1 1-1H6a1 1 0 0 1 1-1h2a1 1 0 0 1 1 1h3.5a1 1 0 0 1 1 1zM4.118 4 4 4.059V13a1 1 0 0 0 1 1h6a1 1 0 0 0 1-1V4.059L11.882 4zM2.5 3h11V2h-11z"/></svg>
<div class="box" style="left:0;top:290px;width:816px;height:2.700px;background:#adb5bd"></div>
<div class="box" style="left:0;top:292.7px;width:816px;height:32px;background:#dee2e6;border-bottom:1px solid #b3b9bf"></div>
<div class="t" style="left:4px;top:299.4px;font-size:12.5px;line-height:16px;transform:scaleX(0.99);transform-origin:left center;font-weight:bold;color:#495057">BOB</div>
<div class="row" style="top:325px;height:47px;background:#fff"></div>
<div class="t" style="left:4px;top:329.8px;font-size:13.5px;line-height:18px;transform:scaleX(0.98);transform-origin:left center;color:#000">401(k)</div>
<div class="t" style="left:4.3px;top:351.1px;font-size:11px;line-height:14px;letter-spacing:0.516px;color:#6c757d">Vanguard</div>
<div class="t" style="left:174.7px;top:331.85px;font-size:12px;line-height:14px;transform:scaleX(0.9607);transform-origin:left center;color:#000">401k</div>
<div class="t" style="left:322px;top:331.85px;font-size:12px;line-height:14px;transform:scaleX(0.9601);transform-origin:left center;color:#000">Bob</div>
<div class="t" style="right:303px;top:329.8px;font-size:13.5px;line-height:18px;transform:scaleX(1.0301);transform-origin:right center;color:#000">$430,000</div>
<div class="ck" style="left:562.8px;top:332px"><svg width="12.5" height="12.5" viewBox="0 0 20 20"><path fill="none" stroke="#fff" stroke-linecap="round" stroke-linejoin="round" stroke-width="3" d="m6 10 3 3 6-6"/></svg></div>
<div class="ck" style="left:669.8px;top:332px"><svg width="12.5" height="12.5" viewBox="0 0 20 20"><path fill="none" stroke="#fff" stroke-linecap="round" stroke-linejoin="round" stroke-width="3" d="m6 10 3 3 6-6"/></svg></div>
<div class="sbtn" style="left:736px;top:329px;border-color:#6c757d"></div>
<svg class="ic" style="left:741px;top:333.3px" width="14" height="14" viewBox="0 0 16 16" fill="#6c757d"><path d="M12.146.146a.5.5 0 0 1 .708 0l3 3a.5.5 0 0 1 0 .708l-10 10a.5.5 0 0 1-.168.11l-5 2a.5.5 0 0 1-.65-.65l2-5a.5.5 0 0 1 .11-.168zM11.207 2.5 13.5 4.793 14.793 3.5 12.5 1.207zm1.586 3L10.5 3.207 4 9.707V10h.5a.5.5 0 0 1 .5.5v.5h.5a.5.5 0 0 1 .5.5v.5h.293zm-9.761 5.175-.106.106-1.528 3.821 3.821-1.528.106-.106A.5.5 0 0 1 5 12.5V12h-.5a.5.5 0 0 1-.5-.5V11h-.5a.5.5 0 0 1-.468-.325"/></svg>
<div class="sbtn" style="left:763px;top:329px;border-color:#dc3545"></div>
<svg class="ic" style="left:768px;top:333px" width="14" height="14" viewBox="0 0 16 16" fill="#dc3545"><path d="M5.5 5.5A.5.5 0 0 1 6 6v6a.5.5 0 0 1-1 0V6a.5.5 0 0 1 .5-.5m2.5 0a.5.5 0 0 1 .5.5v6a.5.5 0 0 1-1 0V6a.5.5 0 0 1 .5-.5m3 .5a.5.5 0 0 0-1 0v6a.5.5 0 0 0 1 0z"/><path d="M14.5 3a1 1 0 0 1-1 1H13v9a2 2 0 0 1-2 2H5a2 2 0 0 1-2-2V4h-.5a1 1 0 0 1-1-1V2a1 1 0 0 1 1-1H6a1 1 0 0 1 1-1h2a1 1 0 0 1 1 1h3.5a1 1 0 0 1 1 1zM4.118 4 4 4.059V13a1 1 0 0 0 1 1h6a1 1 0 0 0 1-1V4.059L11.882 4zM2.5 3h11V2h-11z"/></svg>
<div class="row" style="top:372px;height:47px;background:#f2f2f2"></div>
<div class="t" style="left:4px;top:376.8px;font-size:13.5px;line-height:18px;transform:scaleX(0.963);transform-origin:left center;color:#000">Traditional IRA</div>
<div class="t" style="left:4.3px;top:398.1px;font-size:11px;line-height:14px;letter-spacing:0.373px;color:#6c757d">Schwab</div>
<div class="t" style="left:174.7px;top:378.85px;font-size:12px;line-height:14px;transform:scaleX(0.8748);transform-origin:left center;color:#000">IRA</div>
<div class="t" style="left:322px;top:378.85px;font-size:12px;line-height:14px;transform:scaleX(0.9601);transform-origin:left center;color:#000">Bob</div>
<div class="t" style="right:303px;top:376.8px;font-size:13.5px;line-height:18px;transform:scaleX(1.0246);transform-origin:right center;color:#000">$98,000</div>
<div class="ck" style="left:562.8px;top:379px"><svg width="12.5" height="12.5" viewBox="0 0 20 20"><path fill="none" stroke="#fff" stroke-linecap="round" stroke-linejoin="round" stroke-width="3" d="m6 10 3 3 6-6"/></svg></div>
<div class="ck" style="left:669.8px;top:379px"><svg width="12.5" height="12.5" viewBox="0 0 20 20"><path fill="none" stroke="#fff" stroke-linecap="round" stroke-linejoin="round" stroke-width="3" d="m6 10 3 3 6-6"/></svg></div>
<div class="sbtn" style="left:736px;top:376px;border-color:#6c757d"></div>
<svg class="ic" style="left:741px;top:380.3px" width="14" height="14" viewBox="0 0 16 16" fill="#6c757d"><path d="M12.146.146a.5.5 0 0 1 .708 0l3 3a.5.5 0 0 1 0 .708l-10 10a.5.5 0 0 1-.168.11l-5 2a.5.5 0 0 1-.65-.65l2-5a.5.5 0 0 1 .11-.168zM11.207 2.5 13.5 4.793 14.793 3.5 12.5 1.207zm1.586 3L10.5 3.207 4 9.707V10h.5a.5.5 0 0 1 .5.5v.5h.5a.5.5 0 0 1 .5.5v.5h.293zm-9.761 5.175-.106.106-1.528 3.821 3.821-1.528.106-.106A.5.5 0 0 1 5 12.5V12h-.5a.5.5 0 0 1-.5-.5V11h-.5a.5.5 0 0 1-.468-.325"/></svg>
<div class="sbtn" style="left:763px;top:376px;border-color:#dc3545"></div>
<svg class="ic" style="left:768px;top:380px" width="14" height="14" viewBox="0 0 16 16" fill="#dc3545"><path d="M5.5 5.5A.5.5 0 0 1 6 6v6a.5.5 0 0 1-1 0V6a.5.5 0 0 1 .5-.5m2.5 0a.5.5 0 0 1 .5.5v6a.5.5 0 0 1-1 0V6a.5.5 0 0 1 .5-.5m3 .5a.5.5 0 0 0-1 0v6a.5.5 0 0 0 1 0z"/><path d="M14.5 3a1 1 0 0 1-1 1H13v9a2 2 0 0 1-2 2H5a2 2 0 0 1-2-2V4h-.5a1 1 0 0 1-1-1V2a1 1 0 0 1 1-1H6a1 1 0 0 1 1-1h2a1 1 0 0 1 1 1h3.5a1 1 0 0 1 1 1zM4.118 4 4 4.059V13a1 1 0 0 0 1 1h6a1 1 0 0 0 1-1V4.059L11.882 4zM2.5 3h11V2h-11z"/></svg>
<div class="row" style="top:419px;height:47px;background:#fff"></div>
<div class="t" style="left:4px;top:423.8px;font-size:13.5px;line-height:18px;transform:scaleX(0.9311);transform-origin:left center;color:#000">Roth IRA</div>
<div class="t" style="left:4.3px;top:445.1px;font-size:11px;line-height:14px;letter-spacing:0.373px;color:#6c757d">Schwab</div>
<div class="t" style="left:174.7px;top:425.85px;font-size:12px;line-height:14px;transform:scaleX(0.9346);transform-origin:left center;color:#000">Roth IRA</div>
<div class="t" style="left:322px;top:425.85px;font-size:12px;line-height:14px;transform:scaleX(0.9601);transform-origin:left center;color:#000">Bob</div>
<div class="t" style="right:303px;top:423.8px;font-size:13.5px;line-height:18px;transform:scaleX(1.0246);transform-origin:right center;color:#000">$37,000</div>
<div class="ck" style="left:562.8px;top:426px"><svg width="12.5" height="12.5" viewBox="0 0 20 20"><path fill="none" stroke="#fff" stroke-linecap="round" stroke-linejoin="round" stroke-width="3" d="m6 10 3 3 6-6"/></svg></div>
<div class="ck" style="left:669.8px;top:426px"><svg width="12.5" height="12.5" viewBox="0 0 20 20"><path fill="none" stroke="#fff" stroke-linecap="round" stroke-linejoin="round" stroke-width="3" d="m6 10 3 3 6-6"/></svg></div>
<div class="sbtn" style="left:736px;top:423px;border-color:#6c757d"></div>
<svg class="ic" style="left:741px;top:427.3px" width="14" height="14" viewBox="0 0 16 16" fill="#6c757d"><path d="M12.146.146a.5.5 0 0 1 .708 0l3 3a.5.5 0 0 1 0 .708l-10 10a.5.5 0 0 1-.168.11l-5 2a.5.5 0 0 1-.65-.65l2-5a.5.5 0 0 1 .11-.168zM11.207 2.5 13.5 4.793 14.793 3.5 12.5 1.207zm1.586 3L10.5 3.207 4 9.707V10h.5a.5.5 0 0 1 .5.5v.5h.5a.5.5 0 0 1 .5.5v.5h.293zm-9.761 5.175-.106.106-1.528 3.821 3.821-1.528.106-.106A.5.5 0 0 1 5 12.5V12h-.5a.5.5 0 0 1-.5-.5V11h-.5a.5.5 0 0 1-.468-.325"/></svg>
<div class="sbtn" style="left:763px;top:423px;border-color:#dc3545"></div>
<svg class="ic" style="left:768px;top:427px" width="14" height="14" viewBox="0 0 16 16" fill="#dc3545"><path d="M5.5 5.5A.5.5 0 0 1 6 6v6a.5.5 0 0 1-1 0V6a.5.5 0 0 1 .5-.5m2.5 0a.5.5 0 0 1 .5.5v6a.5.5 0 0 1-1 0V6a.5.5 0 0 1 .5-.5m3 .5a.5.5 0 0 0-1 0v6a.5.5 0 0 0 1 0z"/><path d="M14.5 3a1 1 0 0 1-1 1H13v9a2 2 0 0 1-2 2H5a2 2 0 0 1-2-2V4h-.5a1 1 0 0 1-1-1V2a1 1 0 0 1 1-1H6a1 1 0 0 1 1-1h2a1 1 0 0 1 1 1h3.5a1 1 0 0 1 1 1zM4.118 4 4 4.059V13a1 1 0 0 0 1 1h6a1 1 0 0 0 1-1V4.059L11.882 4zM2.5 3h11V2h-11z"/></svg>
</div>
<div class="box" style="left:1204px;top:724px;width:52px;height:52px;border-radius:26px;background:#0d6efd;box-shadow:0 4px 12px rgba(13,110,253,.4)"></div>
<svg class="ic" style="left:1220px;top:740px" width="20" height="20" viewBox="0 0 16 16" fill="#fff"><path d="M16 8c0 3.866-3.582 7-8 7a9 9 0 0 1-2.347-.306c-.584.296-1.925.864-4.181 1.234-.2.032-.352-.176-.273-.362.354-.836.674-1.95.77-2.966C.744 11.37 0 9.76 0 8c0-3.866 3.582-7 8-7s8 3.134 8 7M5 8a1 1 0 1 0-2 0 1 1 0 0 0 2 0m4 0a1 1 0 1 0-2 0 1 1 0 0 0 2 0m3 1a1 1 0 1 0 0-2 1 1 0 0 0 0 2"/></svg>
</body>
</html>
